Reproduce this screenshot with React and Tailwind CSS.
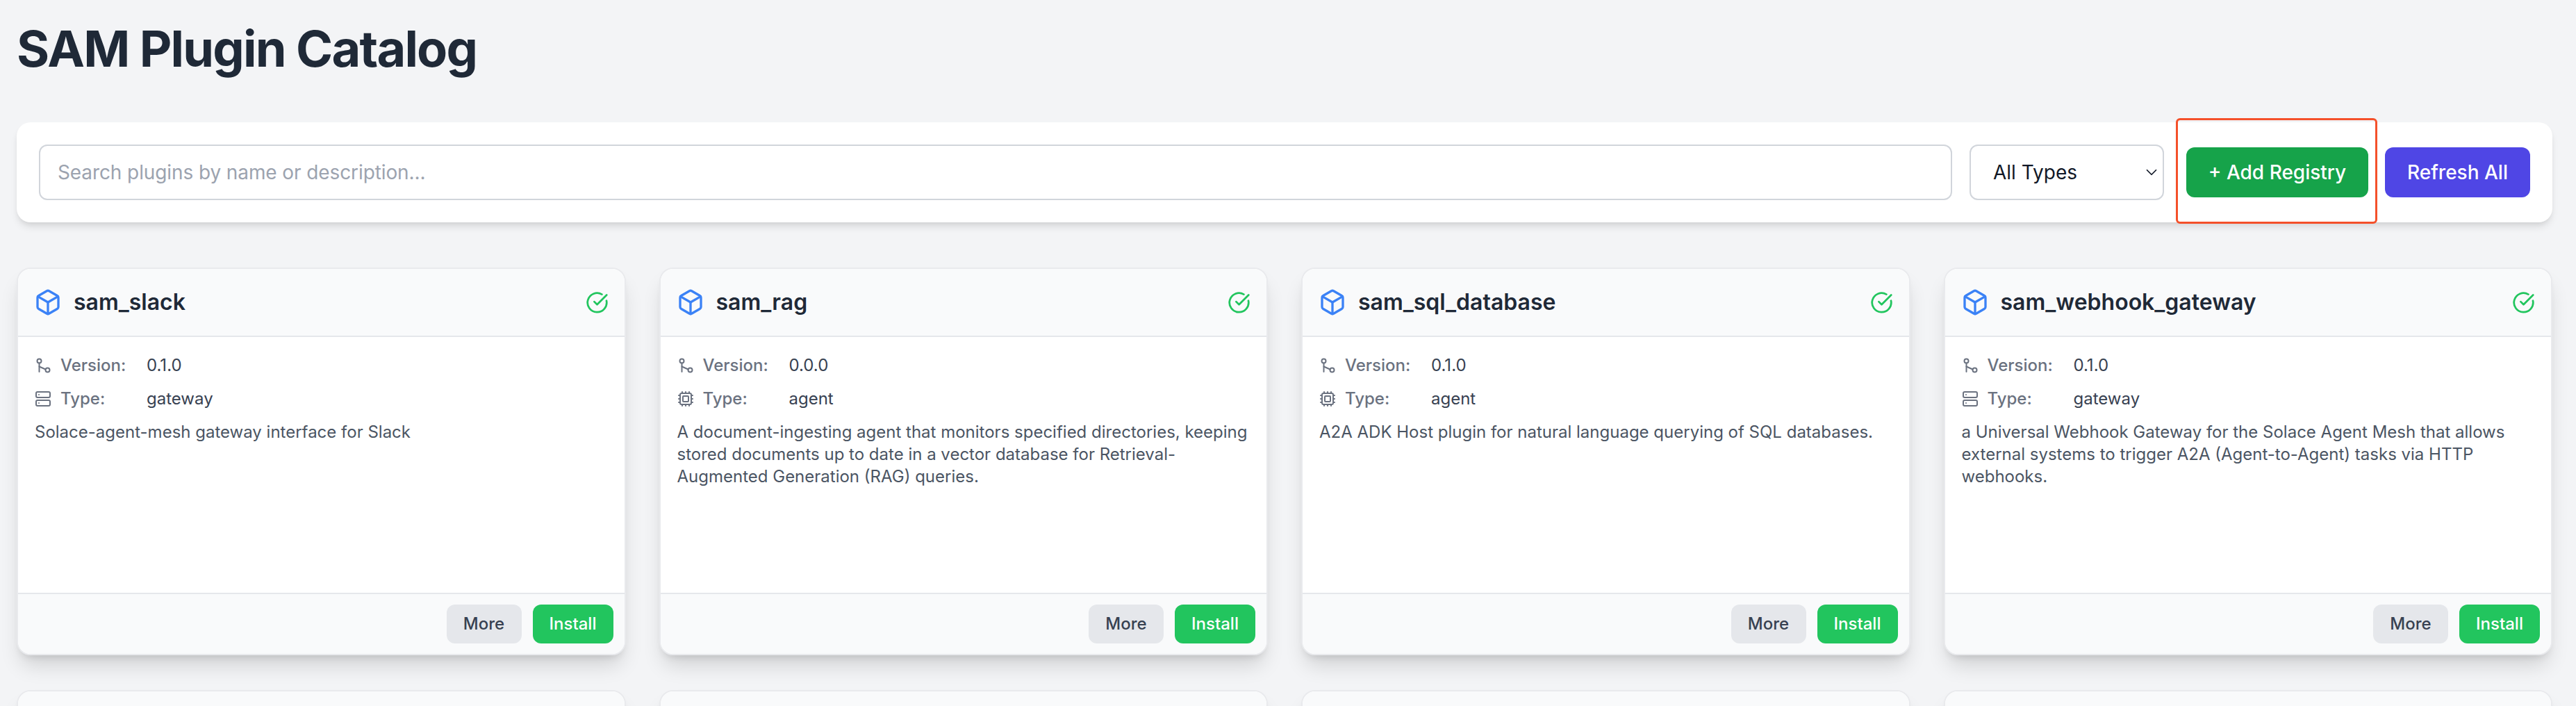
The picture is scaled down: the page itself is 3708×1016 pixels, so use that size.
import { Box, ChevronDown, CircleCheckBig, Cpu, Server } from 'lucide-react';

const plugins = [
    {
        name: 'sam_slack',
        version: '0.1.0',
        type: 'gateway',
        description: 'Solace-agent-mesh gateway interface for Slack',
    },
    {
        name: 'sam_rag',
        version: '0.0.0',
        type: 'agent',
        description:
            'A document-ingesting agent that monitors specified directories, keeping stored documents up to date in a vector database for Retrieval-Augmented Generation (RAG) queries.',
    },
    {
        name: 'sam_sql_database',
        version: '0.1.0',
        type: 'agent',
        description: 'A2A ADK Host plugin for natural language querying of SQL databases.',
    },
    {
        name: 'sam_webhook_gateway',
        version: '0.1.0',
        type: 'gateway',
        description:
            'a Universal Webhook Gateway for the Solace Agent Mesh that allows external systems to trigger A2A (Agent-to-Agent) tasks via HTTP webhooks.',
    },
];

const cardClass =
    'min-w-0 rounded-[20px] border-2 border-[#e9eaed] bg-white overflow-hidden shadow-[0_20px_30px_-6px_rgba(0,0,0,0.14),0_8px_12px_-6px_rgba(0,0,0,0.12)]';

function VersionIcon() {
    return (
        <svg width="24" height="24" viewBox="0 0 24 24" fill="none" stroke="currentColor" strokeWidth="2" strokeLinecap="round" strokeLinejoin="round">
            <circle cx="6.5" cy="5.5" r="3" />
            <path d="M6.5 8.5V21" />
            <path d="M6.5 13.5l9 4" />
            <circle cx="18.5" cy="18.5" r="3" />
        </svg>
    );
}

function PluginCard({ plugin }) {
    const TypeIcon = plugin.type === 'agent' ? Cpu : Server;

    return (
        <div className={`${cardClass} h-[558px] flex flex-col`}>
            <div className="h-[98px] shrink-0 flex items-center justify-between pl-[23px] pr-[23px] bg-[#f9fafb] border-b-2 border-[#e5e7eb]">
                <div className="flex items-center gap-[17px]">
                    <Box size={40} className="text-[#3b82f6]" />
                    <span className="text-[32px] font-semibold text-[#1f2937]">{plugin.name}</span>
                </div>
                <CircleCheckBig size={33} className="text-[#22c55e]" />
            </div>

            <div className="flex-1 pt-[17px] pl-[24px] pr-[24px] text-[24px] leading-[32px] text-[#4b5563]">
                <div className="flex items-center h-[48px]">
                    <span className="w-[24px] mr-[13px] text-[#6b7280]">
                        <VersionIcon />
                    </span>
                    <span className="w-[124px] text-[#6b7280] font-medium">Version:</span>
                    <span className="text-[#374151]">{plugin.version}</span>
                </div>
                <div className="flex items-center h-[48px]">
                    <span className="w-[24px] mr-[13px] text-[#6b7280]">
                        <TypeIcon size={24} />
                    </span>
                    <span className="w-[124px] text-[#6b7280] font-medium">Type:</span>
                    <span className="text-[#374151]">{plugin.type}</span>
                </div>
                <p className="mt-[8px]">{plugin.description}</p>
            </div>

            <div className="h-[88px] shrink-0 flex items-center justify-end gap-[16px] pr-[16px] bg-[#f9fafb] border-t-2 border-[#e5e7eb]">
                <button className="w-[108px] h-[56px] rounded-[12px] bg-[#e5e7eb] text-[24px] font-medium text-[#374151]">More</button>
                <button className="w-[116px] h-[56px] rounded-[12px] bg-[#22c55e] text-[24px] font-medium text-white">Install</button>
            </div>
        </div>
    );
}

export default function App() {
    return (
        <div className="h-[1016px] overflow-hidden bg-[#f3f4f6] pl-[24px] pr-[34px] font-['Inter',sans-serif]">
            <h1 className="pt-[30px] h-[176px] text-[72px] leading-[80px] font-bold tracking-tight text-[#1f2937]">SAM Plugin Catalog</h1>

            {/* Search bar */}
            <div className="h-[144px] rounded-[20px] bg-white flex items-center px-[32px] shadow-[0_8px_12px_-2px_rgba(0,0,0,0.1),0_4px_8px_-4px_rgba(0,0,0,0.1)]">
                <input
                    type="text"
                    placeholder="Search plugins by name or description..."
                    className="flex-1 h-[80px] px-[25px] rounded-[12px] border-2 border-[#d1d5db] text-[28px] tracking-[-0.1px] placeholder:text-[#9ca3af]"
                />
                <div className="relative ml-[25px]">
                    <select className="block appearance-none w-[280px] h-[80px] pl-[32px] rounded-[12px] border-2 border-[#d1d5db] bg-white text-[28px] text-[#111827]">
                        <option>All Types</option>
                    </select>
                    <ChevronDown size={26} strokeWidth={1.6} className="absolute right-[5px] top-[27px] text-[#111827] pointer-events-none" />
                </div>
                <div className="relative ml-[32px]">
                    <button className="w-[262px] h-[72px] rounded-[12px] bg-[#16a34a] text-[28px] font-medium text-white">+ Add Registry</button>
                    <div className="absolute left-[-15px] top-[-42px] w-[290px] h-[152px] rounded-[6px] border-[3px] border-[#f4502a]"></div>
                </div>
                <button className="w-[209px] h-[72px] ml-[24px] rounded-[12px] bg-[#4f46e5] text-[28px] font-medium text-white">Refresh All</button>
            </div>

            {/* Plugin grid */}
            <div className="grid grid-cols-4 gap-x-[48px] gap-y-[50px] mt-[65px]">
                {plugins.map((plugin) => (
                    <PluginCard key={plugin.name} plugin={plugin} />
                ))}
                {plugins.map((plugin) => (
                    <div key={plugin.name} className={`${cardClass} h-[558px]`}>
                        <div className="h-[98px] bg-[#f9fafb] border-b-2 border-[#e5e7eb]"></div>
                    </div>
                ))}
            </div>
        </div>
    );
}
